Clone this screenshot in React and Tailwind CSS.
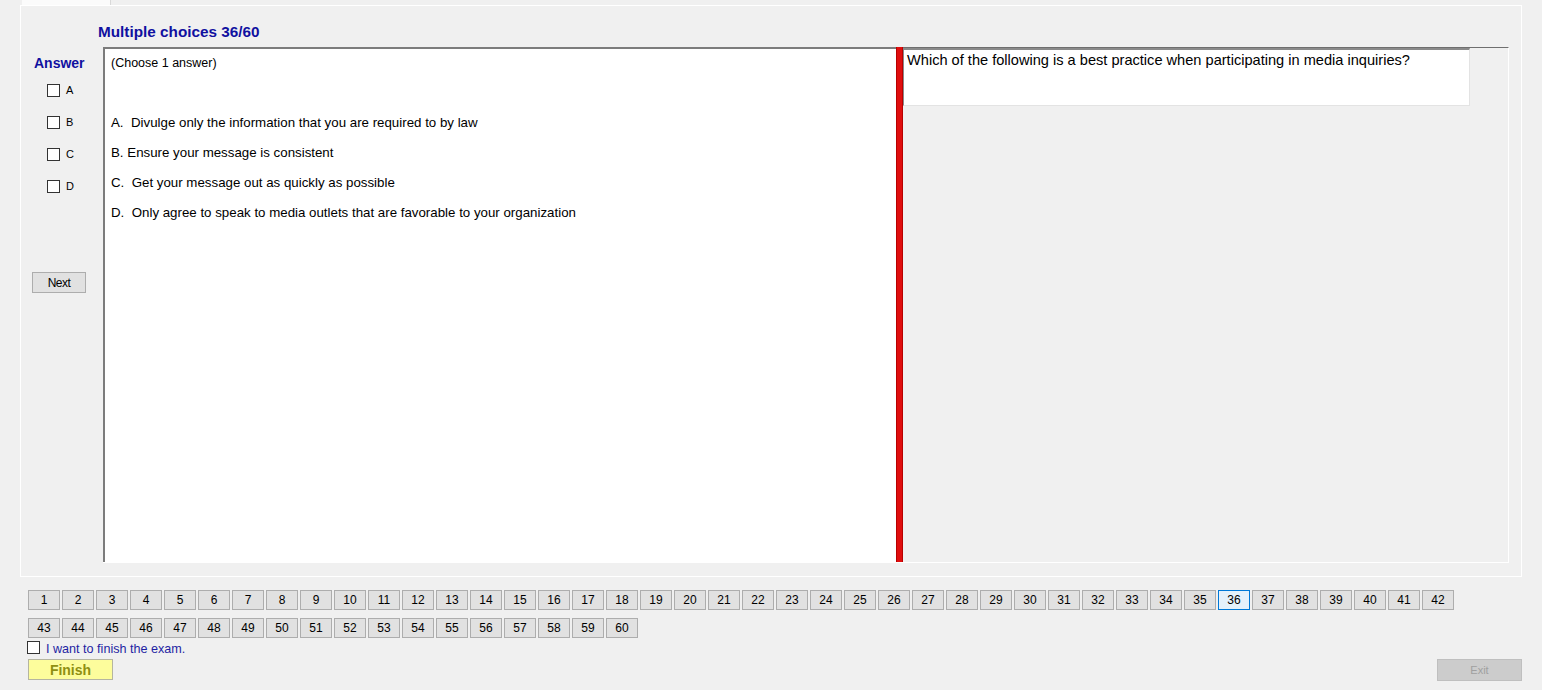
const options = [
  "A.  Divulge only the information that you are required to by law",
  "B. Ensure your message is consistent",
  "C.  Get your message out as quickly as possible",
  "D.  Only agree to speak to media outlets that are favorable to your organization",
];

const numbers = Array.from({ length: 60 }, (_, i) => i + 1);
const current = 36;

function Box({ className = "" }) {
  return <span className={`inline-block w-[13px] h-[13px] border border-[#333] bg-white ${className}`} />;
}

function NumButton({ n }) {
  const active = n === current;
  return (
    <button
      className={`w-[32px] h-[20px] text-[12px] leading-none text-black border ${
        active ? "bg-[#e5f1fb] border-[#0078d7]" : "bg-[#e1e1e1] border-[#adadad]"
      }`}
    >
      {n}
    </button>
  );
}

export default function App() {
  return (
    <div className="w-[1542px] h-[690px] bg-[#f0f0f0] overflow-hidden font-['Liberation_Sans',Arial,sans-serif]">
      {/* Tab strip */}
      <div className="h-[5px] flex">
        <div className="ml-[22px] w-[89px] bg-[#fbfbfb] border-r border-[#d9d9d9]" />
      </div>

      {/* Tab page */}
      <div className="ml-[20px] w-[1502px] h-[572px] border border-white flex flex-col">
        <div className="pl-[77px] mt-[18px] h-[16px] leading-[16px] text-[15.3px] font-bold text-[#1010a0]">
          Multiple choices 36/60
        </div>

        <div className="flex mt-[7px]">
          {/* Answer column */}
          <div className="w-[82px] flex flex-col">
            <div className="pl-[13px] mt-[8px] h-[16px] leading-[16px] text-[14px] font-bold text-[#1010a0]">Answer</div>
            <div className="flex flex-col gap-[19px] mt-[13px] pl-[26px]">
              {["A", "B", "C", "D"].map((l) => (
                <label key={l} className="flex items-center h-[13px] gap-[6px] text-[11px] text-black">
                  <Box />
                  {l}
                </label>
              ))}
            </div>
            <button className="ml-[11px] mt-[79px] w-[54px] h-[21px] bg-[#e1e1e1] border border-[#adadad] text-[12px] text-black tracking-[-0.5px]">
              Next
            </button>
          </div>

          {/* Split container */}
          <div className="flex w-[1406px] h-[516px] border-b border-white">
            <div className="w-[793px] bg-white border-l-2 border-t-2 border-[#7c7c7c] pl-[6px] pt-[6px] text-[13.3px] text-black">
              <div className="h-[16px] leading-[16px] text-[12.5px]">(Choose 1 answer)</div>
              <div className="flex flex-col mt-[44px] gap-[14px]">
                {options.map((o) => (
                  <div key={o} className="h-[16px] leading-[16px] whitespace-pre">
                    {o}
                  </div>
                ))}
              </div>
            </div>
            <div className="w-[7px] bg-[#e00e0e] border-x border-[#b80000]" />
            <div className="w-[606px] border-t border-[#6f6f6f] border-r border-r-white">
              <div className="w-[567px] h-[58px] bg-white border-t-2 border-l border-[#8a8a8a] border-b border-r border-b-[#e3e3e3] border-r-[#e3e3e3] pl-[3px] pt-[1px] text-[14.6px] leading-[18px] text-black">
                Which of the following is a best practice when participating in media inquiries?
              </div>
            </div>
          </div>
        </div>
      </div>

      {/* Number buttons */}
      <div className="pl-[28px] mt-[13px] flex flex-col gap-[8px]">
        <div className="flex gap-[2px]">
          {numbers.slice(0, 42).map((n) => (
            <NumButton key={n} n={n} />
          ))}
        </div>
        <div className="flex gap-[2px]">
          {numbers.slice(42).map((n) => (
            <NumButton key={n} n={n} />
          ))}
        </div>
      </div>

      <label className="flex items-center gap-[6px] pl-[27px] mt-[2px] h-[14px] text-[12.6px] text-[#1f1fa3]">
        <Box />
        <span className="mt-[4px]">I want to finish the exam.</span>
      </label>

      <div className="flex justify-between pl-[28px] pr-[20px] mt-[5px]">
        <button className="w-[85px] h-[21px] bg-[#fdfd9c] border border-[#b5b5a0] text-[14px] font-bold text-[#8f8f12] leading-none">
          Finish
        </button>
        <button className="w-[85px] h-[22px] bg-[#cccccc] border border-[#bfbfbf] text-[11px] text-[#a0a0a0] leading-none">
          Exit
        </button>
      </div>
    </div>
  );
}
